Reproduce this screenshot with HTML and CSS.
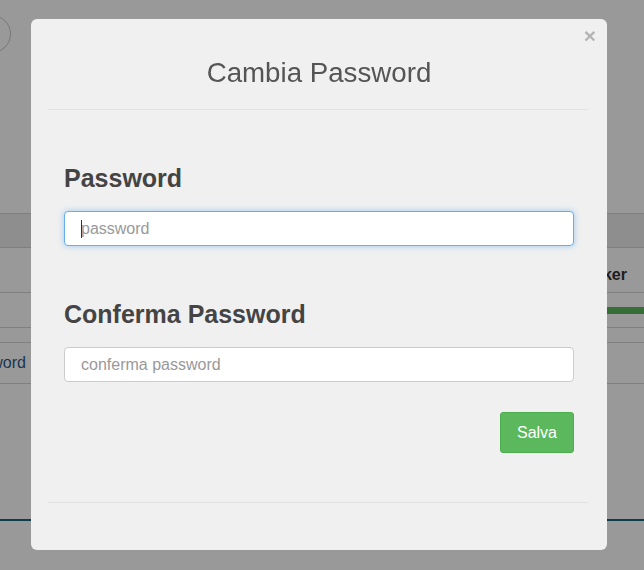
FILE: index.html
```html
<!DOCTYPE html>
<html lang="it">
<head>
<meta charset="utf-8">
<title>Cambia Password</title>
<link rel="stylesheet" href="styles.css">
</head>
<body>
<div class="page">
  <div class="topbar"><div class="avatar"></div></div>
  <div class="table">
    <div class="row head"></div>
    <div class="row r1"><div class="cell-right">Worker</div></div>
    <div class="row r2"><div class="bar"></div></div>
    <div class="row r3"></div>
    <div class="row r4"><div class="cell-left"><span>Cambia password</span></div></div>
  </div>
  <div class="rule"></div>
</div>
<div class="backdrop"></div>
<div class="modal">
  <div class="modal-header">
    <h4 class="modal-title">Cambia Password</h4>
    <span class="close">×</span>
  </div>
  <div class="modal-body">
    <div class="group">
      <label class="label">Password</label>
      <div class="field">
        <input class="input focused" type="password" placeholder="password">
        <span class="caret"></span>
      </div>
    </div>
    <div class="group second">
      <label class="label">Conferma Password</label>
      <div class="field">
        <input class="input" type="password" placeholder="conferma password">
      </div>
    </div>
    <div class="actions">
      <button class="btn">Salva</button>
    </div>
  </div>
  <div class="modal-footer"></div>
</div>
</body>
</html>
```

FILE: styles.css
```css
html, body {
  margin: 0;
  padding: 0;
  background: #ffffff;
  font-family: "Liberation Sans", Arial, sans-serif;
  width: 644px;
  height: 570px;
  overflow: hidden;
}

.page {
  width: 644px;
  height: 570px;
}

.topbar {
  height: 213px;
  box-sizing: border-box;
  padding-top: 15px;
}

.avatar {
  width: 38px;
  height: 38px;
  box-sizing: border-box;
  border: 1px solid #c8c8c8;
  border-radius: 50%;
  margin-left: -27px;
}

.table {
  border-top: 1px solid #d4d4d4;
}

.row {
  border-bottom: 1px solid #d4d4d4;
  box-sizing: border-box;
  display: flex;
  align-items: center;
}

.head {
  height: 34px;
  background: #ededed;
}

.r1 { height: 45px; padding-top: 10px; }
.r2 { height: 35px; }
.r3 { height: 15px; }
.r4 { height: 41px; }

.cell-right {
  width: 627px;
  text-align: right;
  font-weight: bold;
  font-size: 16px;
  color: #333333;
}

.bar {
  margin-left: 540px;
  width: 104px;
  height: 7px;
  background: #5cb85c;
}

.cell-left {
  width: 26px;
  display: flex;
  justify-content: flex-end;
  white-space: nowrap;
  font-size: 16px;
  color: #2c5a8a;
}

.rule {
  margin-top: 135px;
  height: 2px;
  background: #19657a;
}

.backdrop {
  position: fixed;
  inset: 0;
  background: rgba(0, 0, 0, 0.4);
}

.modal {
  position: absolute;
  left: 31px;
  top: 19px;
  width: 576px;
  background: #f0f0f0;
  border-radius: 6px;
}

.modal-header {
  position: relative;
  padding: 38px 0 21px;
  margin: 0 19px 0 17px;
  border-bottom: 1px solid #e2e2e2;
}

.modal-title {
  margin: 0;
  text-align: center;
  font-weight: normal;
  font-size: 27.7px;
  line-height: 31px;
  color: #555555;
  padding-left: 2px;
}

.close {
  position: absolute;
  right: -8px;
  top: 6px;
  font-size: 21px;
  font-weight: bold;
  line-height: 21px;
  color: #b4b4b4;
}

.modal-body {
  padding: 54px 33px 49px;
}

.group {
  display: flex;
  flex-direction: column;
  gap: 19px;
}

.group.second {
  margin-top: 54px;
}

.label {
  font-size: 25px;
  font-weight: bold;
  line-height: 28px;
  color: #444444;
}

.field {
  position: relative;
}

.input {
  display: block;
  width: 100%;
  height: 35px;
  box-sizing: border-box;
  border: 1px solid #cccccc;
  border-radius: 4px;
  background: #ffffff;
  padding: 0 16px;
  font-family: "Liberation Sans", Arial, sans-serif;
  font-size: 16px;
  color: #555555;
  outline: none;
}

.input::placeholder {
  color: #999999;
}

.input.focused {
  border-color: #66afe9;
  box-shadow: 0 0 6px rgba(102, 175, 233, 0.6);
}

.caret {
  position: absolute;
  left: 17px;
  top: 9px;
  width: 1px;
  height: 18px;
  background: #333333;
}

.actions {
  display: flex;
  justify-content: flex-end;
  margin-top: 30px;
}

.btn {
  height: 41px;
  width: 74px;
  border: 1px solid #4cae4c;
  border-radius: 3px;
  background: #5cb85c;
  color: #ffffff;
  font-family: "Liberation Sans", Arial, sans-serif;
  font-size: 16px;
  padding: 0;
}

.modal-footer {
  margin: 0 19px 0 17px;
  border-top: 1px solid #e2e2e2;
  height: 47px;
}
```
